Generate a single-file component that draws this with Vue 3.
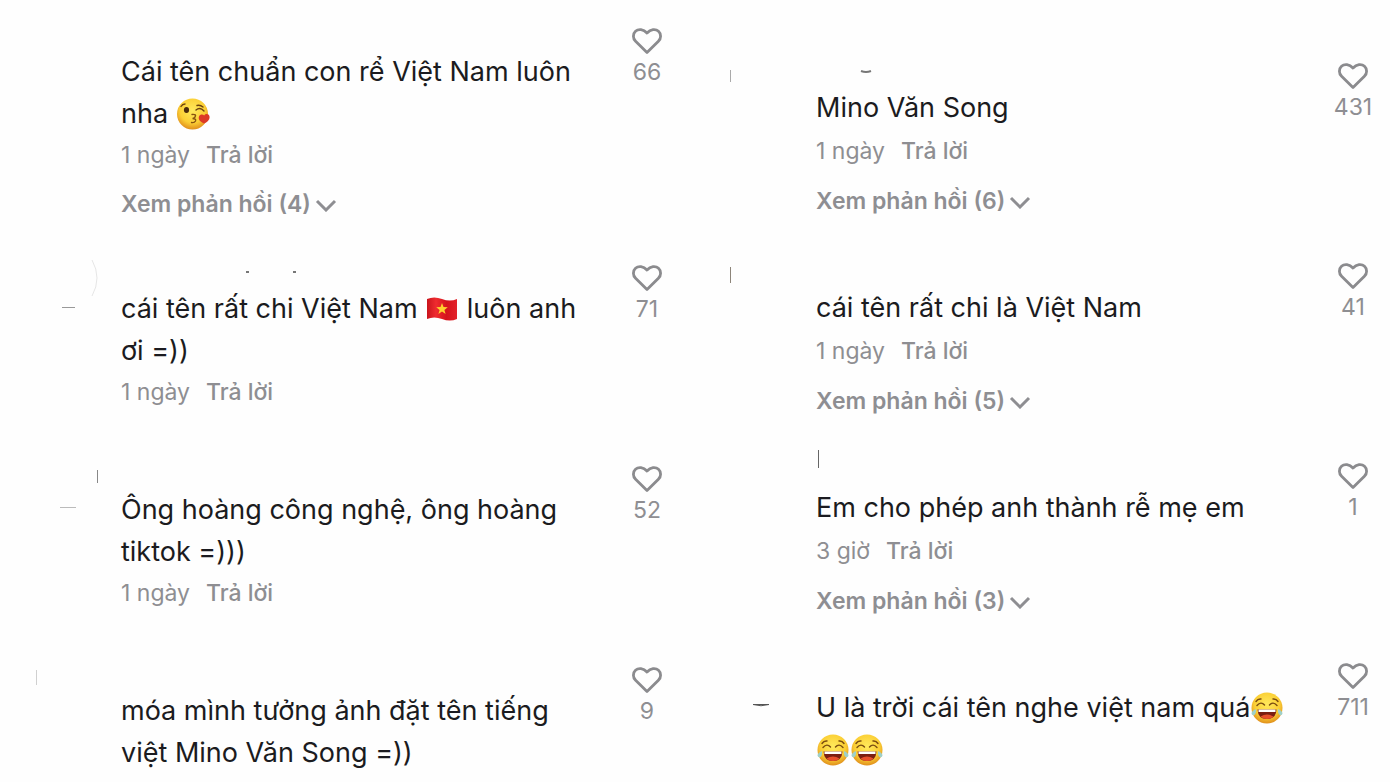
<script setup>
const columns = [
  {
    side: 'left',
    comments: [
      { likes: 66, lines: [['Cái tên chuẩn con rể Việt Nam luôn'], ['nha ', { icon: 'kiss' }]], time: '1 ngày', replies: 4 },
      {
        likes: 71,
        lines: [['cái tên rất chi Việt Nam ', { icon: 'flag' }, ' luôn anh'], ['ơi =))']],
        time: '1 ngày',
        avatar: [
          { d: 'M92 12Q102 30 92 48', stroke: '#e6e6e6', width: 1 },
          { d: 'M62 59.500H75', stroke: '#999', width: 1 },
        ],
        name: [
          { d: 'M125 24h3', stroke: '#777', width: 2 },
          { d: 'M172 24h3', stroke: '#777', width: 2 },
        ],
      },
      {
        likes: 52,
        lines: [['Ông hoàng công nghệ, ông hoàng'], ['tiktok =)))']],
        time: '1 ngày',
        avatar: [
          { d: 'M97.500 21v13', stroke: '#888', width: 1 },
          { d: 'M60 58.500H76', stroke: '#bbb', width: 1 },
        ],
      },
      {
        likes: 9,
        lines: [['móa mình tưởng ảnh đặt tên tiếng'], ['việt Mino Văn Song =))']],
        time: '',
        avatar: [{ d: 'M36.500 20v15', stroke: '#d0d0d0', width: 1 }],
      },
    ],
  },
  {
    side: 'right',
    comments: [
      {
        likes: 431,
        lines: [['Mino Văn Song']],
        time: '1 ngày',
        replies: 6,
        avatar: [{ d: 'M35.500 23v12', stroke: '#aaa', width: 1 }],
        name: [{ d: 'M45 24Q50 26 55 24', stroke: '#777', width: 2 }],
      },
      {
        likes: 41,
        lines: [['cái tên rất chi là Việt Nam']],
        time: '1 ngày',
        replies: 5,
        avatar: [{ d: 'M35.500 20v16', stroke: '#8d857a', width: 1 }],
      },
      {
        likes: 1,
        lines: [['Em cho phép anh thành rễ mẹ em']],
        time: '3 giờ',
        replies: 3,
        name: [{ d: 'M2.500 3v18', stroke: '#666', width: 1 }],
      },
      {
        likes: 711,
        lines: [['U là trời cái tên nghe việt nam quá', { icon: 'joy' }], [{ icon: 'joy' }, { icon: 'joy' }]],
        time: '',
        avatar: [{ d: 'M58 57.500H74Q66 60 58 57.500Z', stroke: '#555', width: 1 }],
      },
    ],
  },
]
</script>

<template>
  <svg class="defs" aria-hidden="true">
    <defs>
      <radialGradient id="face" cx="50%" cy="38%" r="62%">
        <stop offset="0" stop-color="#ffe95c" />
        <stop offset="0.65" stop-color="#fbcf35" />
        <stop offset="1" stop-color="#e08f1c" />
      </radialGradient>
      <linearGradient id="cloth" x1="0" x2="1">
        <stop offset="0" stop-color="#c9141c" />
        <stop offset="0.3" stop-color="#ef2b2f" />
        <stop offset="0.65" stop-color="#d5131b" />
        <stop offset="1" stop-color="#e3222a" />
      </linearGradient>
      <symbol id="kiss" viewBox="0 0 34 34">
        <circle cx="16.500" cy="17" r="15.500" fill="url(#face)" />
        <ellipse cx="10.500" cy="13" rx="2.600" ry="3" fill="#4a2a0c" />
        <path d="M5 9.500Q6.500 7 9 7M21 8.500Q24 7.500 27 10M20 13Q24 9.500 28 14" fill="none" stroke="#6b4210" stroke-width="1.400" stroke-linecap="round" />
        <path d="M16 17.500Q21 17 19 20Q18 21.500 16.500 21.500Q20.500 21.500 19.500 24Q18.500 26 15.500 25.500" fill="none" stroke="#86520f" stroke-width="1.400" stroke-linecap="round" />
        <path d="M28 26.500C24 24.500 22 22.500 23 19.500C24 17 27 17 28.200 18.500C30 16 33.500 17 33.600 20C33.700 23 31 25.500 28 26.500Z" fill="#dc3a26" />
      </symbol>
      <symbol id="joy" viewBox="0 0 34 34">
        <circle cx="17" cy="17" r="15.500" fill="url(#face)" />
        <path d="M6 10.500Q8 7.500 11 8M23 8Q26 7.500 28 10.500M7 14.500Q11 10 14.500 14M19.500 14Q23 10 27 14.500" fill="none" stroke="#7a4c10" stroke-width="1.400" stroke-linecap="round" />
        <path d="M7.500 18.500H26.500Q26 28 17 28Q8 28 7.500 18.500Z" fill="#7b1f12" />
        <path d="M8.500 18.500H25.500V21H8.500Z" fill="#fff" />
        <path d="M10.500 25.500Q17 21.500 23.500 25.500Q21 28 17 28Q13 28 10.500 25.500Z" fill="#e8502b" />
        <path d="M6 18Q1.500 20 1.500 22.500Q2 25 4.500 24Q6.500 22.500 6 18ZM28 18Q32.500 20 32.500 22.500Q32 25 29.500 24Q27.500 22.500 28 18Z" fill="#9fd0c8" />
      </symbol>
      <symbol id="flag" viewBox="0 0 34 34">
        <path d="M2 7Q9 4 17 7Q25 10 32 7V27Q25 30 17 27Q9 24 2 27Z" fill="url(#cloth)" />
        <path d="M17 11l1.500 4 4.300.2-3.400 2.700 1.200 4.100-3.600-2.400-3.600 2.400 1.200-4.100-3.400-2.700 4.300-.2z" fill="#ffd02e" />
      </symbol>
    </defs>
  </svg>
  <main class="board">
    <section v-for="col in columns" :key="col.side" class="column" :class="col.side">
      <article v-for="(c, i) in col.comments" :key="i" class="comment">
        <svg class="avatar" width="110" height="64" aria-hidden="true">
          <path v-for="(m, k) in c.avatar" :key="k" :d="m.d" :stroke="m.stroke" :stroke-width="m.width" fill="none" />
        </svg>
        <div class="body">
          <svg class="name" width="300" height="40" aria-hidden="true">
            <path v-for="(m, k) in c.name" :key="k" :d="m.d" :stroke="m.stroke" :stroke-width="m.width" fill="none" />
          </svg>
          <p class="text">
            <span v-for="(line, l) in c.lines" :key="l" class="line">
              <template v-for="(part, p) in line" :key="p">
                <svg v-if="part.icon" class="emoji" aria-hidden="true"><use :href="'#' + part.icon" /></svg>
                <template v-else>{{ part }}</template>
              </template>
            </span>
          </p>
          <div v-if="c.time" class="meta">
            <span>{{ c.time }}</span>
            <button type="button" class="reply">Trả lời</button>
          </div>
          <button v-if="c.replies" type="button" class="replies">
            Xem phản hồi ({{ c.replies }})
            <svg width="22" height="16" viewBox="0 0 22 16" aria-hidden="true">
              <path d="M2 5l9 9 9-9" fill="none" stroke="#8e8e92" stroke-width="3" />
            </svg>
          </button>
        </div>
        <button type="button" class="like" aria-label="Thích">
          <svg width="32" height="28" viewBox="0 0 32 28" aria-hidden="true">
            <path d="M16 25.500L4.600 14.300C1.700 11.400 1.700 6.900 4.500 4.300C7.400 1.600 12.400 2 16 6C19.600 2 24.600 1.600 27.500 4.300C30.300 6.900 30.300 11.400 27.400 14.300Z" fill="none" stroke="#8b8b8e" stroke-width="2.800" stroke-linejoin="round" />
          </svg>
          <span>{{ c.likes }}</span>
        </button>
      </article>
    </section>
  </main>
</template>

<style>
body {
  background: #fefefe;
  overflow: hidden;
}
</style>

<style scoped>
.defs {
  position: absolute;
  width: 0;
  height: 0;
}
.board {
  display: grid;
  grid-template-columns: 1fr 1fr;
  height: 100vh;
  overflow: hidden;
  font-family: Inter, "Noto Sans", sans-serif;
  color: #1b1b20;
}
.column {
  min-width: 0;
  padding-top: 11px;
}
.right {
  padding-top: 47px;
}
.comment {
  display: grid;
  grid-template-columns: 121px 1fr 96px;
  align-items: start;
  margin-bottom: 37px;
}
.right .comment {
  grid-template-columns: 121px 1fr 74px;
  margin-bottom: 28px;
}
.avatar,
.name {
  display: block;
}
.body {
  min-width: 0;
}
.text {
  margin: 0;
  font-size: 27px;
  line-height: 42px;
}
.line {
  display: block;
  height: 42px;
  white-space: pre;
}
.emoji {
  width: 34px;
  height: 34px;
  vertical-align: -8px;
}
.meta {
  display: flex;
  align-items: center;
  gap: 16px;
  height: 40px;
  font-size: 23px;
  color: #8e8e92;
}
.right .meta {
  height: 44px;
}
button {
  padding: 0;
  border: 0;
  background: none;
  font: inherit;
  color: #8e8e92;
  cursor: pointer;
}
.reply {
  font-weight: 500;
}
.replies {
  display: flex;
  align-items: center;
  gap: 4px;
  height: 30px;
  margin: 14px 0 -8px;
  font-size: 23px;
  font-weight: 600;
}
.right .replies {
  margin: 13px 0 3px;
}
.like {
  display: flex;
  flex-direction: column;
  align-items: center;
  gap: 2px;
  padding-top: 16px;
  font-size: 23px;
  line-height: 30px;
}
.right .like {
  padding-top: 15px;
}
</style>
